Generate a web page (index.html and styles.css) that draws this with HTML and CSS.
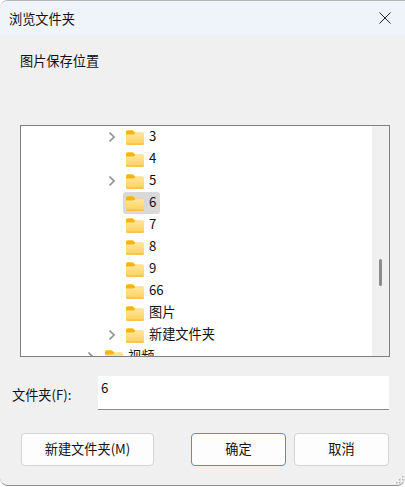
FILE: index.html
```html
<!DOCTYPE html>
<html lang="zh-CN">
<head>
    <meta charset="UTF-8">
    <meta name="viewport" content="width=device-width, initial-scale=1.0">
    <title>浏览文件夹</title>
    <link rel="stylesheet" href="styles.css">
</head>
<body>
    <svg class="defs" width="0" height="0">
        <defs>
            <linearGradient id="folder-front" x1="0" y1="0" x2="0" y2="1">
                <stop offset="0" stop-color="#ffe698"/>
                <stop offset="1" stop-color="#fdd05c"/>
            </linearGradient>
            <symbol id="folder" viewBox="0 0 18 15">
                <path d="M0 2.2C0 1 .8.3 1.8.3h4.4c.6 0 1 .2 1.4.6L9.500 3v2H0z" fill="#f8b512"/>
                <path d="M9 2.400h7.400c.9 0 1.600.7 1.600 1.600v1H9z" fill="#fbcf5e"/>
                <path d="M0 4.400l7.500 0 2-1.200H18v10c0 .9-.7 1.500-1.600 1.500H1.600C.7 14.700 0 14.100 0 13.200z" fill="url(#folder-front)"/>
                <path d="M0 13.400h18c0 .8-.7 1.300-1.600 1.300H1.600C.7 14.700 0 14.200 0 13.400z" fill="#f3b93f"/>
            </symbol>
            <symbol id="chevron" viewBox="0 0 8 12">
                <path d="M1.500 1.500 6 6l-4.500 4.500" fill="none" stroke="#8f8f8f" stroke-width="1.700"/>
            </symbol>
        </defs>
    </svg>

    <div class="window">
        <div class="titlebar">
            <span class="title">浏览文件夹</span>
            <svg class="close" width="12" height="12" viewBox="0 0 12 12">
                <path d="M.5.500l11 11M11.500.500l-11 11" stroke="#222" stroke-width="1" fill="none"/>
            </svg>
        </div>

        <div class="content">
            <div class="prompt">图片保存位置</div>

            <div class="tree">
                <div class="tree-list">
                    <div class="row">
                        <svg class="arrow"><use href="#chevron"/></svg>
                        <svg class="icon"><use href="#folder"/></svg>
                        <span class="name">3</span>
                    </div>
                    <div class="row">
                        <span class="arrow"></span>
                        <svg class="icon"><use href="#folder"/></svg>
                        <span class="name">4</span>
                    </div>
                    <div class="row">
                        <svg class="arrow"><use href="#chevron"/></svg>
                        <svg class="icon"><use href="#folder"/></svg>
                        <span class="name">5</span>
                    </div>
                    <div class="row selected">
                        <span class="arrow"></span>
                        <svg class="icon"><use href="#folder"/></svg>
                        <span class="name">6</span>
                    </div>
                    <div class="row">
                        <span class="arrow"></span>
                        <svg class="icon"><use href="#folder"/></svg>
                        <span class="name">7</span>
                    </div>
                    <div class="row">
                        <span class="arrow"></span>
                        <svg class="icon"><use href="#folder"/></svg>
                        <span class="name">8</span>
                    </div>
                    <div class="row">
                        <span class="arrow"></span>
                        <svg class="icon"><use href="#folder"/></svg>
                        <span class="name">9</span>
                    </div>
                    <div class="row">
                        <span class="arrow"></span>
                        <svg class="icon"><use href="#folder"/></svg>
                        <span class="name">66</span>
                    </div>
                    <div class="row">
                        <span class="arrow"></span>
                        <svg class="icon"><use href="#folder"/></svg>
                        <span class="name">图片</span>
                    </div>
                    <div class="row">
                        <svg class="arrow"><use href="#chevron"/></svg>
                        <svg class="icon"><use href="#folder"/></svg>
                        <span class="name">新建文件夹</span>
                    </div>
                    <div class="row parent">
                        <svg class="arrow"><use href="#chevron"/></svg>
                        <svg class="icon"><use href="#folder"/></svg>
                        <span class="name">视频</span>
                    </div>
                </div>
                <div class="scrollbar">
                    <div class="thumb"></div>
                </div>
            </div>

            <div class="field">
                <label class="field-label">文件夹(F):</label>
                <div class="field-input">6</div>
            </div>

            <div class="buttons">
                <button class="btn btn-new">新建文件夹(M)</button>
                <button class="btn btn-ok">确定</button>
                <button class="btn btn-cancel">取消</button>
            </div>
        </div>

        <svg class="grip" width="10" height="10" viewBox="0 0 10 10">
            <path d="M7 1h1.500v1.500H7zM4 4h1.500v1.500H4zM7 4h1.500v1.500H7zM1 7h1.500v1.500H1zM4 7h1.500v1.500H4zM7 7h1.500v1.500H7z" fill="#b5b5b5"/>
        </svg>
    </div>
</body>
</html>
```

FILE: styles.css
```css
* {
    box-sizing: border-box;
}
html, body {
    margin: 0;
    padding: 0;
    background: #fff;
}
body {
    width: 405px;
    height: 487px;
    overflow: hidden;
    font-family: "Noto Sans CJK SC", "Noto Sans", sans-serif;
    font-size: 13.200px;
    color: #111;
}
.defs {
    position: absolute;
}
.window {
    position: relative;
    height: 486px;
    background: #f0f0f0;
    border-top: 1px solid #b4b4b4;
    border-bottom: 1px solid #8e8e8e;
    border-radius: 8px 0 8px 8px;
    overflow: hidden;
}
.titlebar {
    height: 34px;
    padding: 0 14px 0 9px;
    display: flex;
    align-items: center;
    justify-content: space-between;
    background: #eff3fa;
}
.content {
    padding: 0 15px 0 20px;
}
.prompt {
    height: 90px;
    padding-top: 16px;
    line-height: 20px;
}
.tree {
    height: 232px;
    display: flex;
    background: #fff;
    border: 1px solid #7f7f7f;
    overflow: hidden;
}
.tree-list {
    flex: 1;
    padding-left: 87px;
}
.row {
    height: 22px;
    display: flex;
    align-items: center;
}
.row.parent {
    margin-left: -21px;
}
.arrow {
    width: 8px;
    height: 12px;
    margin-right: 10px;
    flex: none;
}
.icon {
    width: 18px;
    height: 15px;
    margin-right: 5px;
    flex: none;
}
.name {
    line-height: 20px;
    margin-bottom: 2px;
}
.row.selected {
    position: relative;
}
.row.selected::before {
    content: "";
    position: absolute;
    left: 15px;
    top: 0;
    width: 37px;
    height: 22px;
    background: #d9d9d9;
    border-radius: 3px;
}
.row.selected .icon,
.row.selected .name {
    position: relative;
}
.scrollbar {
    width: 17px;
    background: #f0f0f0;
    flex: none;
    padding: 133px 0 0 7px;
}
.thumb {
    width: 3px;
    height: 27px;
    background: #8c8c8c;
    border-radius: 2px;
}
.field {
    margin: 19px 0 0 -8px;
    display: flex;
    align-items: flex-start;
}
.field-label {
    width: 86px;
    padding-top: 9px;
    line-height: 20px;
}
.field-input {
    width: 291px;
    height: 34px;
    padding: 2px 3px;
    line-height: 20px;
    background: #fff;
    border-bottom: 1px solid #8a8a8a;
}
.buttons {
    margin: 23px 0 0 1px;
    display: flex;
}
.btn {
    height: 33px;
    padding: 0 0 2px;
    font: inherit;
    color: inherit;
    background: #fdfdfd;
    border: 1px solid #d4d4d4;
    border-radius: 4px;
}
.btn-new {
    width: 133px;
    margin-right: 37px;
}
.btn-ok {
    width: 95px;
    margin-right: 8px;
    border: 1.500px solid #4a94d0;
}
.btn-cancel {
    width: 95px;
}
.close {
    flex: none;
}
.grip {
    position: absolute;
    right: 0;
    bottom: 0;
}
```
